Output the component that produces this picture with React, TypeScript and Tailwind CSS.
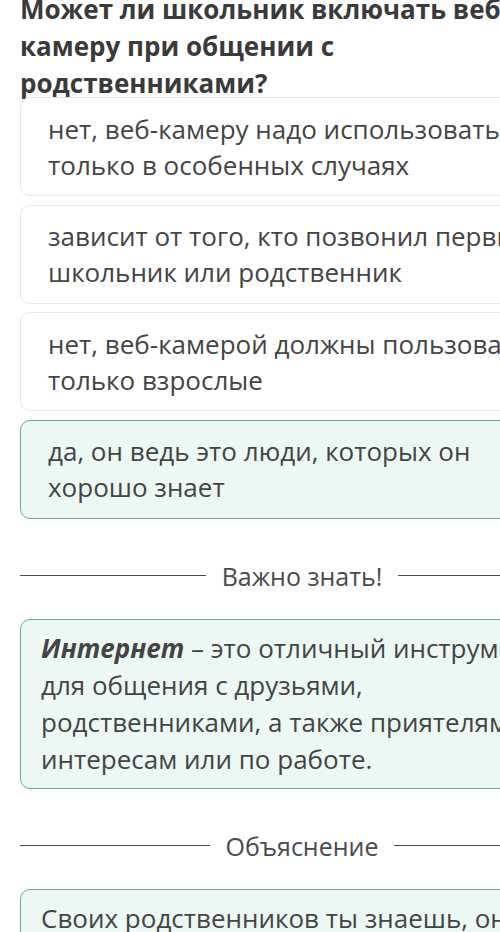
const options = [
  { text: 'нет, веб-камеру надо использовать только в особенных случаях', correct: false },
  { text: 'зависит от того, кто позвонил первым: школьник или родственник', correct: false },
  { text: 'нет, веб-камерой должны пользоваться только взрослые', correct: false },
  { text: 'да, он ведь это люди, которых он хорошо знает', correct: true },
];

function Divider({ label }: { label: string }) {
  return (
    <div className="flex items-center gap-4">
      <div className="h-px flex-1 bg-[#4a4a4a]" />
      <span className="text-[25px] leading-[36px] text-[#4a4a4a]">{label}</span>
      <div className="h-px flex-1 bg-[#4a4a4a]" />
    </div>
  );
}

export default function App() {
  return (
    <div className="w-[500px] h-[932px] overflow-hidden bg-white">
      <div
        className="w-[604px] px-5 text-[#3f3f3f]"
        style={{ fontFamily: '"Open Sans", "Noto Sans", sans-serif' }}
      >
        {/* Question */}
        <h1 className="-mt-[9px] text-[26px] leading-[37px] font-bold text-[#3a3a3a]">
          Может ли школьник включать веб-камеру при общении с родственниками?
        </h1>

        {/* Answers */}
        <div className="-mt-[5px] flex flex-col gap-[8.5px]">
          {options.map((o) => (
            <div
              key={o.text}
              className={
                o.correct
                  ? 'rounded-[10px] border border-[#6aa597] bg-[#ecf8f4] pl-[27px] pr-[40px] py-[12.5px] text-[26px] leading-[36px] text-[#444]'
                  : 'rounded-[10px] border border-[#e6e6e6] bg-white pl-[27px] pr-[5px] py-[12.5px] text-[26px] leading-[36px] text-[#444]'
              }
            >
              {o.text}
            </div>
          ))}
        </div>

        <div className="mt-[39px]">
          <Divider label="Важно знать!" />
        </div>

        {/* Info */}
        <div className="mt-[25px] rounded-[10px] border border-[#6aa597] bg-[#ecf8f4] pl-5 pr-[13px] py-[10px] text-[26px] leading-[37px] text-[#444]">
          <b className="italic">Интернет</b> – это отличный инструмент для общения с друзьями,
          родственниками, а также приятелями по интересам или по работе.
        </div>

        <div className="mt-[39px]">
          <Divider label="Объяснение" />
        </div>

        <div className="mt-[25px] rounded-[10px] border border-[#6aa597] bg-[#ecf8f4] px-5 py-[10px] text-[26px] leading-[37px] text-[#444]">
          Своих родственников ты знаешь, они тебе не навредят, поэтому веб-камеру можно включать.
        </div>
      </div>
    </div>
  );
}
